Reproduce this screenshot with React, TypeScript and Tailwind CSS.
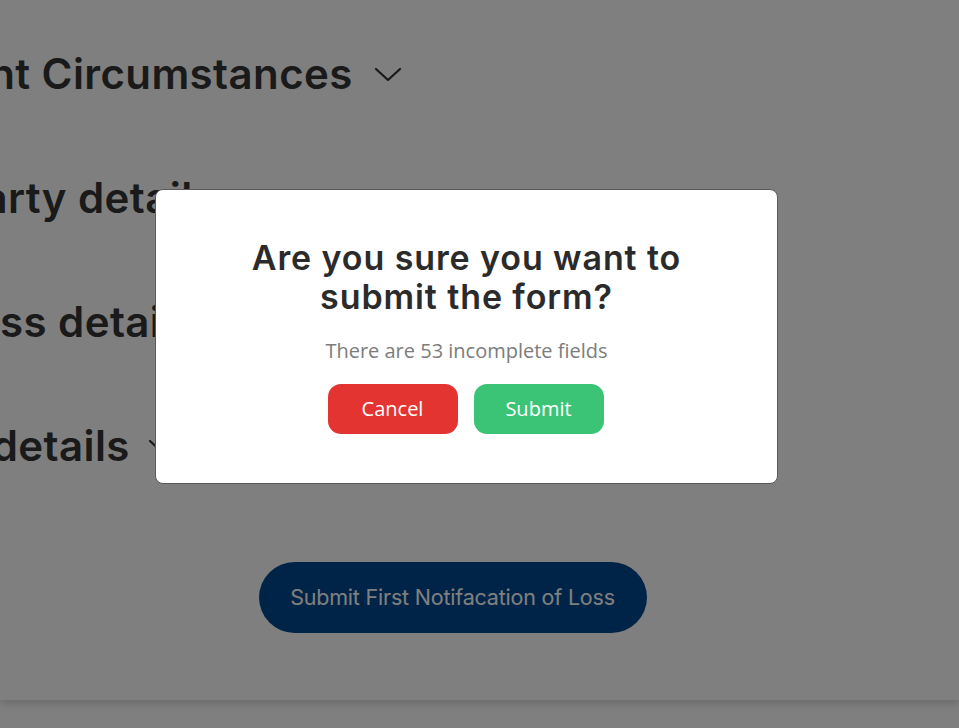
import React from "react";

function Chevron({ className }: { className?: string }) {
  return (
    <svg className={className} viewBox="0 0 28 16" fill="none" stroke="currentColor" strokeWidth="2.2" strokeLinecap="round" strokeLinejoin="round">
      <polyline points="2,2 14,13 26,2" />
    </svg>
  );
}

export default function App() {
  const heading = "text-[42px] font-semibold leading-[48px] tracking-[0.4px] text-[#343434] whitespace-nowrap";
  return (
    <div className="relative w-[959px] h-[728px] overflow-hidden bg-white" style={{ fontFamily: "Inter, 'Noto Sans', sans-serif" }}>
      <div className="h-[700px] bg-white shadow-[0_3px_8px_rgba(0,0,0,0.18)] flex flex-col">
        <div className="flex flex-col pt-[50px] gap-[76px]">
          <div className="flex items-center">
            <span className={`${heading} ml-[-137px]`}>Incident Circumstances</span>
            <Chevron className="w-[28px] h-[16px] ml-[21px] mt-[2px] text-[#333]" />
          </div>
          <div className="flex items-center">
            <span className={`${heading} ml-[-163px]`}>Third party details</span>
          </div>
          <div className="flex items-center">
            <span className={`${heading} ml-[-50px]`}>Loss details</span>
          </div>
          <div className="flex items-center">
            <span className={`${heading} ml-[-172px]`}>Vehicle details</span>
            <Chevron className="w-[28px] h-[16px] ml-[18px] mt-[2px] text-[#333]" />
          </div>
        </div>
        <div className="flex justify-center mt-[92px] pr-[54px]">
          <button className="w-[388px] h-[71px] rounded-full bg-[#00488f] text-white text-[21.5px] tracking-[-0.2px]">
            Submit First Notifacation of Loss
          </button>
        </div>
      </div>

      <div className="absolute inset-0 bg-black/50" />

      <div className="absolute left-[155px] top-[189px] w-[623px] h-[295px] bg-white rounded-[8px] border border-[#5a5a5a] flex flex-col items-center pt-[48px]">
        <h2 className="text-[34px] font-semibold leading-[39px] text-[#2b2b2b] text-center tracking-[0.9px]">
          Are you sure you want to
          <br />
          submit the form?
        </h2>
        <p className="mt-[22px] text-[20px] leading-[26px] text-[#7c7c7c]" style={{ fontFamily: "'Open Sans', sans-serif" }}>
          There are 53 incomplete fields
        </p>
        <div className="flex gap-[16px] mt-[20px] -ml-[2px]" style={{ fontFamily: "'Open Sans', sans-serif" }}>
          <button className="w-[130px] h-[50px] rounded-[13px] bg-[#e43431] text-white text-[20px]">Cancel</button>
          <button className="w-[130px] h-[50px] rounded-[13px] bg-[#3cc476] text-white text-[20px]">Submit</button>
        </div>
      </div>
    </div>
  );
}
